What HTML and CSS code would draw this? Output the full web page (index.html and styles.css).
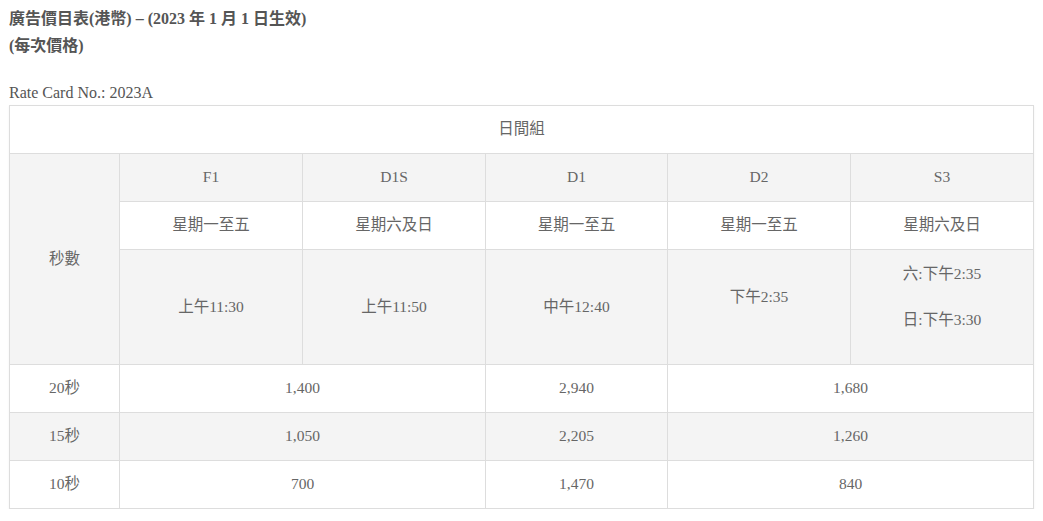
FILE: index.html
```html
<!DOCTYPE html>
<html lang="zh-Hant">
<head>
<meta charset="utf-8">
<title>廣告價目表</title>
<link rel="stylesheet" href="styles.css">
</head>
<body>
<div class="page">
  <div class="title">
    <strong>廣告價目表(港幣) – (2023 年 1 月 1 日生效)</strong><br>
    <strong>(每次價格)</strong>
  </div>
  <p class="rate-no">Rate Card No.: 2023A</p>
  <table class="rate-table">
    <colgroup>
      <col class="c-sec">
      <col class="c-slot">
      <col class="c-slot">
      <col class="c-slot2">
      <col class="c-slot">
      <col class="c-slot">
    </colgroup>
    <tbody>
      <tr class="row-white">
        <td colspan="6">日間組</td>
      </tr>
      <tr class="row-gray">
        <td rowspan="3" class="sec-head">秒數</td>
        <td>F1</td>
        <td>D1S</td>
        <td>D1</td>
        <td>D2</td>
        <td>S3</td>
      </tr>
      <tr class="row-white">
        <td>星期一至五</td>
        <td>星期六及日</td>
        <td>星期一至五</td>
        <td>星期一至五</td>
        <td>星期六及日</td>
      </tr>
      <tr class="row-gray row-times">
        <td>上午11:30</td>
        <td>上午11:50</td>
        <td>中午12:40</td>
        <td><p class="tp">下午2:35</p></td>
        <td><p class="tp">六:下午2:35</p><p class="tp">日:下午3:30</p></td>
      </tr>
      <tr class="row-white">
        <td>20秒</td>
        <td colspan="2">1,400</td>
        <td>2,940</td>
        <td colspan="2">1,680</td>
      </tr>
      <tr class="row-gray">
        <td>15秒</td>
        <td colspan="2">1,050</td>
        <td>2,205</td>
        <td colspan="2">1,260</td>
      </tr>
      <tr class="row-white">
        <td>10秒</td>
        <td colspan="2">700</td>
        <td>1,470</td>
        <td colspan="2">840</td>
      </tr>
    </tbody>
  </table>
</div>
</body>
</html>
```

FILE: styles.css
```css
html, body {
  margin: 0;
  padding: 0;
  background: #fff;
}

body {
  font-family: "Liberation Serif", "Noto Sans CJK TC", serif;
  font-size: 16px;
  color: #666;
}

.page {
  padding: 5px 9px 0 9px;
}

.title {
  color: #555;
  line-height: 27px;
}

.title strong {
  font-weight: bold;
}

.rate-no {
  margin: 21px 0 0 0;
  line-height: 25px;
  color: #555;
}

.rate-table {
  width: 1024px;
  table-layout: fixed;
  border-collapse: collapse;
  box-shadow: 0 1px 2px rgba(0, 0, 0, 0.06);
  color: #666;
  font-size: 15.5px;
}

.c-sec { width: 110px; }
.c-slot { width: 183px; }
.c-slot2 { width: 182px; }

.rate-table td {
  border: 1px solid #ddd;
  text-align: center;
  vertical-align: middle;
  padding: 10px 8px 11px 8px;
  line-height: 26px;
}

.row-white td { background: #fff; }
.row-gray td { background: #f4f4f4; }

.row-times td {
  padding-top: 11px;
  padding-bottom: 11px;
}

.tp {
  margin: 0 0 20px 0;
  line-height: 26px;
}
```
